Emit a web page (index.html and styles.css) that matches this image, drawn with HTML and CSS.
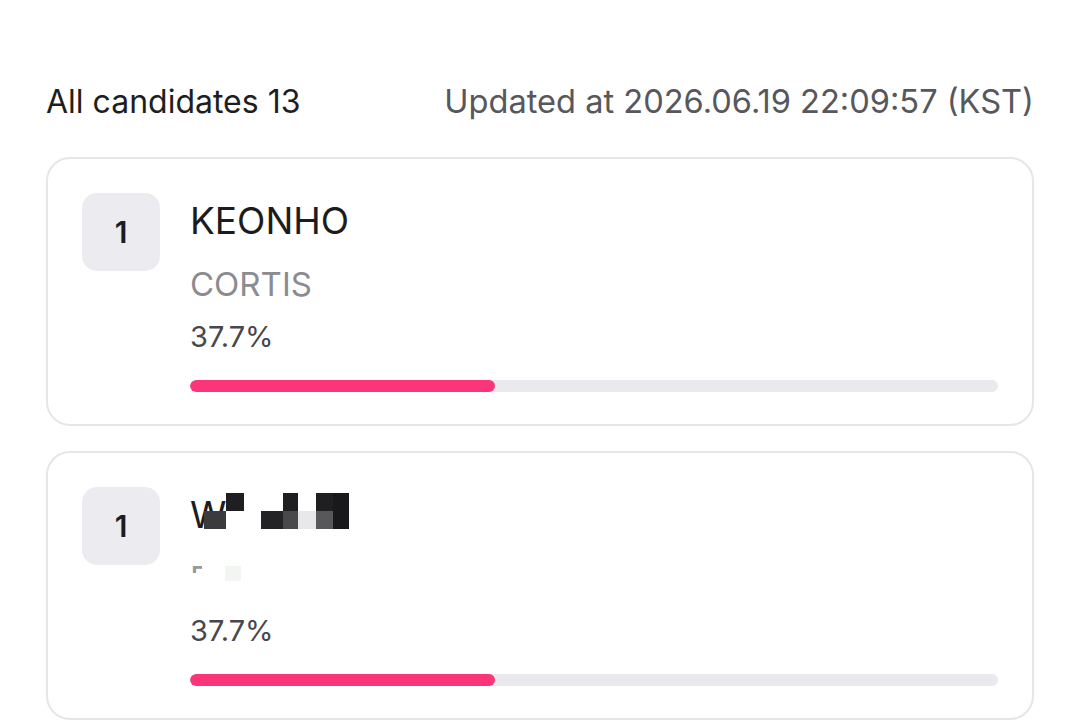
FILE: index.html
```html
<!DOCTYPE html>
<html lang="en">
<head>
<meta charset="utf-8">
<title>All candidates</title>
<link rel="stylesheet" href="styles.css">
</head>
<body>
<main class="page">
  <header class="summary">
    <div class="count">All candidates 13</div>
    <div class="updated">Updated at 2026.06.19 22:09:57 (KST)</div>
  </header>

  <section class="list">
    <article class="card">
      <div class="rank">1</div>
      <div class="info">
        <div class="name">KEONHO</div>
        <div class="group">CORTIS</div>
        <div class="pct">37.7%</div>
        <div class="bar"><div class="fill" style="width:37.7%"></div></div>
      </div>
    </article>

    <article class="card">
      <div class="rank">1</div>
      <div class="info">
        <div class="name masked"><span class="first">W</span><span class="mosaic">
          <span class="mc c1"><i class="t0"></i><i class="b1"></i></span>
          <span class="mc c2"><i class="t2"></i><i class="b0"></i></span>
          <span class="mc c3 gapl"><i class="t0"></i><i class="b2"></i></span>
          <span class="mc c4"><i class="t2"></i><i class="b3"></i></span>
          <span class="mc c5"><i class="t0"></i><i class="bl"></i></span>
          <span class="mc c6"><i class="t2"></i><i class="b4"></i></span>
          <span class="mc c7"><i class="t5"></i><i class="b5"></i></span>
        </span></div>
        <div class="group masked-group"><span class="clip">D</span><span class="ghost"></span></div>
        <div class="pct">37.7%</div>
        <div class="bar"><div class="fill" style="width:37.7%"></div></div>
      </div>
    </article>
  </section>
</main>
</body>
</html>
```

FILE: styles.css
```css
* { box-sizing: border-box; }
html, body { margin: 0; padding: 0; background: #ffffff; }
body {
  font-family: Inter, "Noto Sans", "Liberation Sans", sans-serif;
  color: #1b1b1f;
  overflow: hidden;
}
.page {
  padding: 78px 46px 0 46px;
}
.summary {
  display: flex;
  justify-content: space-between;
  align-items: center;
  height: 46px;
  margin-bottom: 33px;
}
.count {
  font-size: 32px;
  color: #1e1e22;
}
.updated {
  font-size: 32.6px;
  color: #57575c;
}
.list {
  display: flex;
  flex-direction: column;
  gap: 25px;
}
.card {
  display: flex;
  gap: 30px;
  border: 2px solid #e6e6e9;
  border-radius: 24px;
  padding: 34px 34px 32px 34px;
  height: 269px;
}
.rank {
  flex: 0 0 78px;
  width: 78px;
  height: 78px;
  border-radius: 15px;
  background: #ebebf0;
  display: flex;
  align-items: center;
  justify-content: center;
  font-size: 30px;
  font-weight: 600;
  color: #1c1c1f;
}
.info {
  flex: 1;
  display: flex;
  flex-direction: column;
  padding-top: 6px;
}
.name {
  font-size: 37px;
  line-height: 44px;
  height: 44px;
  color: #1c1c20;
}
.group {
  font-size: 33px;
  line-height: 40px;
  height: 40px;
  margin-top: 21px;
  color: #8b8b90;
}
.pct {
  font-size: 29px;
  line-height: 34px;
  margin-top: 16px;
  color: #47474c;
}
.bar {
  margin-top: 26px;
  height: 12px;
  border-radius: 6px;
  background: #e9e9ee;
  overflow: hidden;
}
.fill {
  height: 100%;
  border-radius: 6px;
  background: #fb3579;
}

/* masked entry */
.masked { display: flex; align-items: flex-start; }
.first { display: block; }
.mosaic {
  display: inline-flex;
  margin-left: -22px;
}
.mc { display: flex; flex-direction: column; }
.mc i { display: block; height: 18px; }
.c1 { width: 22px; }
.c2 { width: 18px; }
.c3 { width: 22px; }
.c4 { width: 15px; }
.c5 { width: 18px; }
.c6 { width: 17px; }
.c7 { width: 16px; }
.gapl { margin-left: 17px; }
.t0, .b0 { background: transparent; }
.b1 { background: #3b3b3d; }
.t2 { background: #1f1f21; }
.b2 { background: #232325; }
.b3 { background: #49494b; }
.bl { background: #e8e8ea; }
.b4 { background: #58585a; }
.t5, .b5 { background: #19191b; }
.masked-group {
  display: flex;
  align-items: flex-start;
}
.clip {
  display: block;
  height: 15px;
  overflow: hidden;
  line-height: 40px;
  color: #98989c;
  width: 12px;
}
.ghost {
  display: block;
  width: 16px;
  height: 15px;
  margin-top: 8px;
  margin-left: 23px;
  background: #f3f5f3;
}
```
